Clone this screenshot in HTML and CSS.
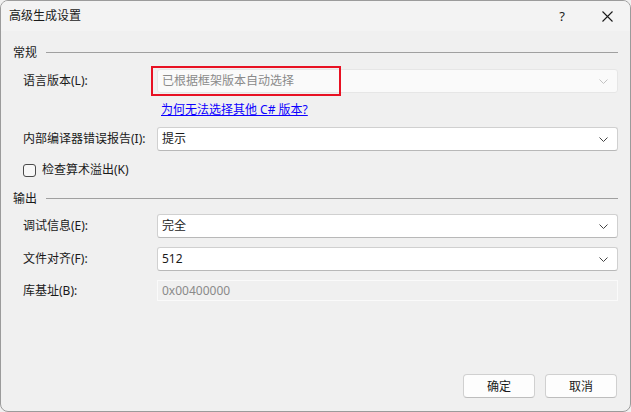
FILE: index.html
```html
<!DOCTYPE html>
<html lang="zh-CN">
<head>
  <meta charset="UTF-8">
  <title>高级生成设置</title>
  <link rel="stylesheet" href="styles.css">
</head>
<body>

<div class="window">
  <!-- Title bar -->
  <div class="titlebar">
    <span class="title">高级生成设置</span>
    <span class="help">?</span>
    <span class="close">
      <svg width="11" height="11" viewBox="0 0 11 11"><path d="M0.5 0.5 L10.5 10.5 M10.5 0.5 L0.5 10.5" stroke="#1a1a1a" stroke-width="1.1" fill="none"/></svg>
    </span>
  </div>

  <div class="content">
    <!-- General -->
    <div class="group-header"><span>常规</span><div class="rule"></div></div>

    <div class="row row-lang">
      <label class="label">语言版本(L):</label>
      <div class="combo disabled">
        <span>已根据框架版本自动选择</span>
        <svg class="chevron" width="9" height="5" viewBox="0 0 9 5"><path d="M0.5 0.5 L4.5 4.5 L8.5 0.5" stroke="#c2c2c2" fill="none"/></svg>
      </div>
      <div class="highlight"></div>
    </div>

    <div class="row row-link">
      <span class="label"></span>
      <a class="link" href="#">为何无法选择其他 C# 版本?</a>
    </div>

    <div class="row row-gap">
      <label class="label">内部编译器错误报告(I):</label>
      <div class="combo">
        <span>提示</span>
        <svg class="chevron" width="9" height="5" viewBox="0 0 9 5"><path d="M0.5 0.5 L4.5 4.5 L8.5 0.5" stroke="#444" fill="none"/></svg>
      </div>
    </div>

    <div class="check-row">
      <span class="checkbox"></span>
      <span>检查算术溢出(K)</span>
    </div>

    <!-- Output -->
    <div class="group-header out"><span>输出</span><div class="rule"></div></div>

    <div class="row row-first">
      <label class="label">调试信息(E):</label>
      <div class="combo">
        <span>完全</span>
        <svg class="chevron" width="9" height="5" viewBox="0 0 9 5"><path d="M0.5 0.5 L4.5 4.5 L8.5 0.5" stroke="#444" fill="none"/></svg>
      </div>
    </div>

    <div class="row row-gap">
      <label class="label">文件对齐(F):</label>
      <div class="combo">
        <span>512</span>
        <svg class="chevron" width="9" height="5" viewBox="0 0 9 5"><path d="M0.5 0.5 L4.5 4.5 L8.5 0.5" stroke="#444" fill="none"/></svg>
      </div>
    </div>

    <div class="row row-base">
      <label class="label">库基址(B):</label>
      <div class="textbox">0x00400000</div>
    </div>
  </div>

  <!-- Dialog buttons -->
  <div class="buttons">
    <button class="btn">确定</button>
    <button class="btn">取消</button>
  </div>
</div>

</body>
</html>
```

FILE: styles.css
```css
/* Basic styles */
body {
  margin: 0;
  padding: 0;
  font-family: "Noto Sans", "Noto Sans CJK SC", sans-serif;
  font-size: 12px;
  color: #1a1a1a;
  background: #f0f0f0;
  overflow: hidden;
}

/* Dialog frame */
.window {
  width: 631px;
  height: 412px;
  box-sizing: border-box;
  border: 1px solid #9b9b9b;
  border-radius: 8px;
  background: #f0f0f0;
  display: flex;
  flex-direction: column;
  overflow: hidden;
}

/* Title bar */
.titlebar {
  height: 30px;
  background: #f3f3f3;
  display: flex;
  align-items: center;
  padding-left: 8px;
  flex-shrink: 0;
}

.title {
  flex: 1;
  line-height: 16px;
}

.help {
  width: 14px;
  text-align: center;
  font-size: 13px;
  margin-right: 33px;
  line-height: 16px;
}

.close {
  display: flex;
  margin-right: 17px;
}

/* Form content */
.content {
  padding: 14px 12px 0 12px;
  flex: 1;
}

.group-header {
  display: flex;
  align-items: center;
  height: 16px;
  line-height: 16px;
}

.group-header .rule {
  flex: 1;
  height: 1px;
  background: #a0a0a0;
  margin-left: 9px;
  margin-top: -1px;
}

.group-header.out {
  margin-top: 13px;
}

.row {
  display: flex;
  align-items: center;
  padding-left: 10px;
  position: relative;
}

.row-lang {
  margin-top: 8px;
}

.row-link {
  margin-top: 9px;
  height: 16px;
}

.row-gap {
  margin-top: 9px;
}

.row-first {
  margin-top: 7px;
}

.row-base {
  margin-top: 9px;
}

.label {
  width: 134px;
  flex-shrink: 0;
  line-height: 16px;
}

/* Combo boxes */
.combo {
  flex: 1;
  height: 24px;
  box-sizing: border-box;
  background: #fff;
  border: 1px solid #d0d0d0;
  border-bottom-color: #b8b8b8;
  border-radius: 3px;
  display: flex;
  align-items: center;
  padding: 0 9px 0 4px;
  line-height: 16px;
}

.combo span {
  flex: 1;
}

.combo.disabled {
  background: #fafafa;
  border: 1px solid #e6e6e6;
  color: #8a8a8a;
}

.chevron {
  display: block;
}

/* Red annotation box */
.highlight {
  position: absolute;
  left: 138px;
  top: -3px;
  width: 190px;
  height: 30px;
  box-sizing: border-box;
  border: 2px solid #e81123;
}

.link {
  color: #0c00ff;
  text-decoration: underline;
  line-height: 16px;
  margin-left: 4px;
}

.textbox {
  flex: 1;
  height: 21px;
  box-sizing: border-box;
  border: 1px solid #fafafa;
  background: #f0f0f0;
  color: #8a8a8a;
  display: flex;
  align-items: center;
  padding-left: 4px;
  line-height: 16px;
}

/* Checkbox */
.check-row {
  display: flex;
  align-items: center;
  padding-left: 10px;
  margin-top: 11px;
  line-height: 16px;
}

.checkbox {
  width: 13px;
  height: 13px;
  box-sizing: border-box;
  border: 1px solid #4a4a4a;
  border-radius: 3px;
  background: #f7f7f7;
  margin-right: 6px;
}

/* Bottom buttons */
.buttons {
  display: flex;
  justify-content: flex-end;
  gap: 10px;
  padding: 0 13px 13px 0;
}

.btn {
  width: 72px;
  height: 24px;
  font-family: inherit;
  font-size: 12px;
  color: #1a1a1a;
  background: #fdfdfd;
  border: 1px solid #d0d0d0;
  border-bottom-color: #bdbdbd;
  border-radius: 4px;
  padding: 0;
}
```
